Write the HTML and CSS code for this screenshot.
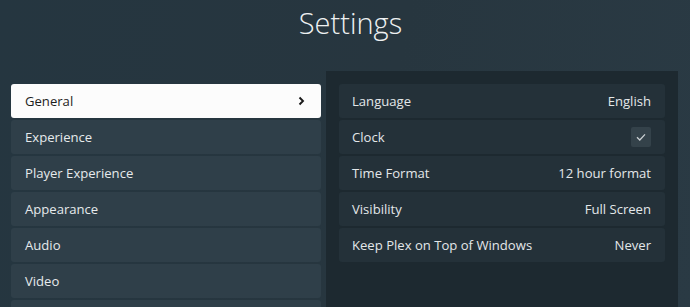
FILE: index.html
```html
<!DOCTYPE html>
<html>
<head>
<meta charset="utf-8">
<link rel="stylesheet" href="styles.css">
</head>
<body>
<div class="page">
  <header class="header"><h1 class="title">Settings</h1></header>
  <main class="main">
    <nav class="menu">
      <div class="menu-item active"><span>General</span>
        <svg class="chev" width="10" height="10" viewBox="0 0 10 10"><polyline points="3.5,1.5 7,5 3.5,8.5" fill="none" stroke="#1a1a1a" stroke-width="1.9"/></svg>
      </div>
      <div class="menu-item"><span>Experience</span></div>
      <div class="menu-item"><span>Player Experience</span></div>
      <div class="menu-item"><span>Appearance</span></div>
      <div class="menu-item"><span>Audio</span></div>
      <div class="menu-item"><span>Video</span></div>
      <div class="menu-item"></div>
    </nav>
    <section class="panel">
      <div class="row"><span>Language</span><span class="val">English</span></div>
      <div class="row"><span>Clock</span>
        <span class="check"><svg width="12" height="12" viewBox="0 0 12 12"><polyline points="2,6.3 4.8,9 10,3.4" fill="none" stroke="#c9cfd2" stroke-width="1.3"/></svg></span>
      </div>
      <div class="row"><span>Time Format</span><span class="val">12 hour format</span></div>
      <div class="row"><span>Visibility</span><span class="val">Full Screen</span></div>
      <div class="row"><span>Keep Plex on Top of Windows</span><span class="val">Never</span></div>
    </section>
  </main>
</div>
</body>
</html>
```
FILE: styles.css
```css
html, body {
  margin: 0;
  padding: 0;
  height: 100%;
  overflow: hidden;
}
body {
  font-family: "Open Sans", "Liberation Sans", sans-serif;
  background: linear-gradient(100deg, #253640 0%, #27363f 55%, #2a3a44 100%);
  color: #e3e7e9;
}
.page {
  display: flex;
  flex-direction: column;
  height: 100%;
}
.header {
  height: 71px;
  flex-shrink: 0;
  display: flex;
  justify-content: center;
  padding-left: 11px;
}
.title {
  margin: 0;
  font-weight: 300;
  font-size: 29px;
  line-height: 46px;
  color: #eef1f2;
}
.main {
  display: flex;
  align-items: flex-start;
  flex: 1;
  min-height: 0;
  overflow: hidden;
}
.menu {
  width: 310px;
  margin: 13px 0 0 11px;
  display: flex;
  flex-direction: column;
  gap: 2px;
}
.menu-item {
  height: 34px;
  flex-shrink: 0;
  background: #2f3f49;
  border-radius: 3px;
  display: flex;
  align-items: center;
  justify-content: space-between;
  padding: 0 14px;
  font-size: 13.1px;
  color: #e6eaec;
}
.menu-item.active {
  background: #fcfcfc;
  color: #1d1d1d;
  padding-right: 15px;
}
.chev { display: block; }
.panel {
  margin-left: 5px;
  width: 326px;
  height: 260px;
  background: #1d2930;
  padding: 13px 13px;
  display: flex;
  flex-direction: column;
  gap: 2px;
}
.row {
  height: 34px;
  flex-shrink: 0;
  background: #243139;
  border-radius: 3px;
  display: flex;
  align-items: center;
  justify-content: space-between;
  padding: 0 14px 0 13px;
  font-size: 13.1px;
  color: #e3e7e9;
}
.check {
  width: 20px;
  height: 20px;
  background: #34424a;
  border-radius: 2px;
  display: flex;
  align-items: center;
  justify-content: center;
}
```
